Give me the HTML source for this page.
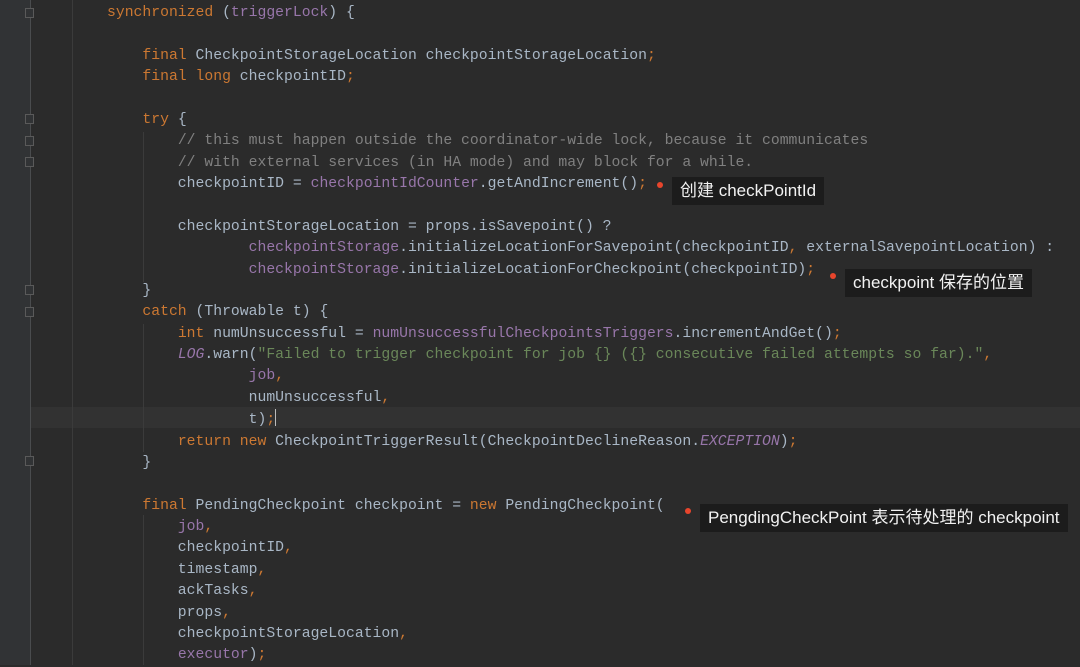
<!DOCTYPE html>
<html><head><meta charset="utf-8"><style>
html,body{margin:0;padding:0;width:1080px;height:665px;overflow:hidden;background:#2b2b2b}
.g{position:absolute;left:0;top:0;width:30px;height:665px;background:#313335}
.gl{position:absolute;left:30px;top:0;width:1px;height:665px;background:#4a4c4e}
.ig{position:absolute;width:1px;background:#3b3b3b}
.hl{position:absolute;left:31px;top:407px;width:1049px;height:21px;background:#323232}
pre{position:absolute;left:36.2px;top:3px;margin:0;font-family:"Liberation Mono",monospace;font-size:14.75px;line-height:21.37px;color:#a9b7c6}
.k{color:#cc7832}.f{color:#9876aa}.c{color:#808080}.s{color:#6a8759}.i{font-style:italic;color:#9876aa}
.fold{position:absolute;left:25px;width:9px;height:10px;border:1px solid #5a5a5a;box-sizing:border-box;background:#313335}
.box{position:absolute;background:#1c1c1c;color:#f2f2f2;font-family:"Liberation Sans","Noto Sans CJK SC",sans-serif;font-size:17px;line-height:28px;padding:0 8px;white-space:nowrap}
.dot{position:absolute;width:6px;height:6px;border-radius:50%;background:#e8452c}
.cur{display:inline-block;width:1px;height:17px;background:#bbb;vertical-align:-3px}
</style></head><body>
<div class="g"></div><div class="gl"></div>
<div class="hl"></div>
<div class="ig" style="left:72px;top:0;height:665px"></div>
<div class="ig" style="left:143px;top:132px;height:150px"></div>
<div class="ig" style="left:143px;top:324px;height:128px"></div>
<div class="ig" style="left:143px;top:515px;height:150px"></div>
<div class="fold" style="top:8px"></div>
<div class="fold" style="top:114px"></div>
<div class="fold" style="top:136px"></div>
<div class="fold" style="top:157px"></div>
<div class="fold" style="top:285px"></div>
<div class="fold" style="top:307px"></div>
<div class="fold" style="top:456px"></div>
<pre>        <span class="k">synchronized</span> (<span class="f">triggerLock</span>) {

            <span class="k">final</span> CheckpointStorageLocation checkpointStorageLocation<span class="k">;</span>
            <span class="k">final long</span> checkpointID<span class="k">;</span>

            <span class="k">try</span> {
                <span class="c">// this must happen outside the coordinator-wide lock, because it communicates</span>
                <span class="c">// with external services (in HA mode) and may block for a while.</span>
                checkpointID = <span class="f">checkpointIdCounter</span>.getAndIncrement()<span class="k">;</span>

                checkpointStorageLocation = props.isSavepoint() ?
                        <span class="f">checkpointStorage</span>.initializeLocationForSavepoint(checkpointID<span class="k">,</span> externalSavepointLocation) :
                        <span class="f">checkpointStorage</span>.initializeLocationForCheckpoint(checkpointID)<span class="k">;</span>
            }
            <span class="k">catch</span> (Throwable t) {
                <span class="k">int</span> numUnsuccessful = <span class="f">numUnsuccessfulCheckpointsTriggers</span>.incrementAndGet()<span class="k">;</span>
                <span class="i">LOG</span>.warn(<span class="s">"Failed to trigger checkpoint for job {} ({} consecutive failed attempts so far)."</span><span class="k">,</span>
                        <span class="f">job</span><span class="k">,</span>
                        numUnsuccessful<span class="k">,</span>
                        t)<span class="k">;</span><span class="cur"></span>
                <span class="k">return new</span> CheckpointTriggerResult(CheckpointDeclineReason.<span class="i">EXCEPTION</span>)<span class="k">;</span>
            }

            <span class="k">final</span> PendingCheckpoint checkpoint = <span class="k">new</span> PendingCheckpoint(
                <span class="f">job</span><span class="k">,</span>
                checkpointID<span class="k">,</span>
                timestamp<span class="k">,</span>
                ackTasks<span class="k">,</span>
                props<span class="k">,</span>
                checkpointStorageLocation<span class="k">,</span>
                <span class="f">executor</span>)<span class="k">;</span></pre>
<div class="dot" style="left:657px;top:182px"></div>
<div class="box" style="left:672px;top:177px">创建 checkPointId</div>
<div class="dot" style="left:830px;top:273px"></div>
<div class="box" style="left:845px;top:269px">checkpoint 保存的位置</div>
<div class="dot" style="left:685px;top:508px"></div>
<div class="box" style="left:700px;top:504px">PengdingCheckPoint 表示待处理的 checkpoint</div>
</body></html>
